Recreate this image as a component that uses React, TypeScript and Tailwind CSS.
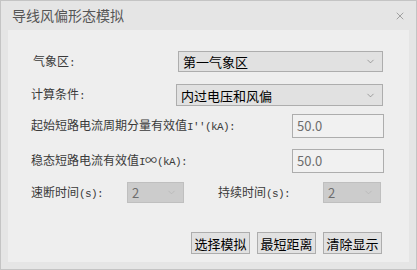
import { ChevronDown, X } from 'lucide-react';

const font = { fontFamily: '"Noto Sans CJK SC", "Liberation Sans", sans-serif' };

function Mono({ children }: { children: string }) {
    return <span className="font-['Liberation_Mono',monospace] text-[11px] tracking-[-0.6px]">{children}</span>;
}

function Select({ value, className, disabled }: { value: string; className: string; disabled?: boolean }) {
    return (
        <div
            className={`flex items-center justify-between border pl-[4px] pr-[6px] ${
                disabled ? 'bg-[#cccccc] border-[#bfbfbf] text-[#6d6d6d]' : 'bg-[#e1e1e1] border-[#adadad] text-black'
            } ${className}`}
        >
            <span className="text-[13px] leading-none">{value}</span>
            <ChevronDown size={11} strokeWidth={1.3} className={disabled ? 'text-[#b0b0b0]' : 'text-[#707070]'} />
        </div>
    );
}

function ValueBox({ value }: { value: string }) {
    return (
        <div className="ml-auto w-[92px] h-[24px] border border-[#adadad] bg-[#f1f1f1] flex items-center pl-[4px] text-[13px] text-[#6d6d6d]">
            {value}
        </div>
    );
}

function Btn({ label }: { label: string }) {
    return (
        <button className="w-[59px] h-[22px] border border-[#adadad] bg-[#e1e1e1] text-[13px] leading-none text-black flex items-center justify-center">
            {label}
        </button>
    );
}

export default function App() {
    return (
        <div style={font} className="w-[417px] h-[270px] border border-[#c4c4c4] bg-[#e5e5e5] flex flex-col">
            <div className="h-[29px] flex items-center justify-between pl-[11px] pr-[10px]">
                <span className="text-[14px] text-[#555555]">导线风偏形态模拟</span>
                <X size={12} strokeWidth={1.5} className="text-[#8a8a8a]" />
            </div>
            <div className="flex-1 mx-[7px] mb-[7px] bg-[#eeeeee] pr-[25px] text-[12px] text-[#3a3a3a]">
                <div className="mt-[21px] h-[21px] flex items-center">
                    <span className="pl-[25px] w-[170px]">气象区<Mono>:</Mono></span>
                    <Select value="第一气象区" className="w-[205px] h-[21px]" />
                </div>
                <div className="mt-[12px] h-[22px] flex items-center">
                    <span className="pl-[23px] w-[168px]">计算条件<Mono>:</Mono></span>
                    <Select value="内过电压和风偏" className="w-[207px] h-[22px]" />
                </div>
                <div className="mt-[8px] h-[24px] flex items-center">
                    <span className="pl-[23px]">起始短路电流周期分量有效值<Mono>I''(kA):</Mono></span>
                    <ValueBox value="50.0" />
                </div>
                <div className="mt-[11px] h-[24px] flex items-center">
                    <span className="pl-[23px]">稳态短路电流有效值<Mono>I</Mono>∞<Mono>(kA):</Mono></span>
                    <ValueBox value="50.0" />
                </div>
                <div className="mt-[9px] h-[21px] flex items-center">
                    <span className="pl-[23px] w-[119px]">速断时间<Mono>(s):</Mono></span>
                    <Select value="2" disabled className="w-[57px] h-[21px]" />
                    <span className="ml-[34px] w-[105px]">持续时间<Mono>(s):</Mono></span>
                    <Select value="2" disabled className="w-[58px] h-[21px]" />
                </div>
                <div className="mt-[29px] mr-[2px] flex justify-end gap-[7px]">
                    <Btn label="选择模拟" />
                    <Btn label="最短距离" />
                    <Btn label="清除显示" />
                </div>
            </div>
        </div>
    );
}
